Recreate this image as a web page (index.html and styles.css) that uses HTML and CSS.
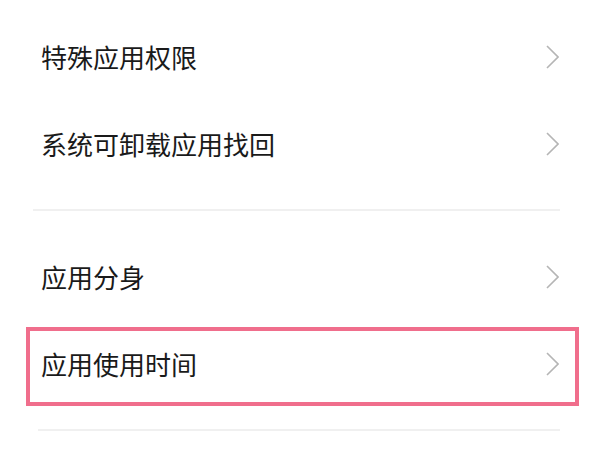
FILE: index.html
```html
<!DOCTYPE html>
<html lang="zh-CN">
<head>
    <meta charset="UTF-8">
    <meta name="viewport" content="width=device-width, initial-scale=1.0">
    <title>应用管理</title>
    <link rel="stylesheet" href="styles.css">
</head>
<body>
    <div class="list">
        <div class="row">
            <span class="label">特殊应用权限</span>
            <svg class="chevron" viewBox="0 0 13 24"><polyline points="1,1 12,12 1,23"/></svg>
        </div>
        <div class="row">
            <span class="label">系统可卸载应用找回</span>
            <svg class="chevron" viewBox="0 0 13 24"><polyline points="1,1 12,12 1,23"/></svg>
        </div>

        <div class="divider"></div>

        <div class="row">
            <span class="label">应用分身</span>
            <svg class="chevron" viewBox="0 0 13 24"><polyline points="1,1 12,12 1,23"/></svg>
        </div>
        <div class="row highlight">
            <span class="label">应用使用时间</span>
            <svg class="chevron" viewBox="0 0 13 24"><polyline points="1,1 12,12 1,23"/></svg>
        </div>

        <div class="divider last"></div>
    </div>
</body>
</html>
```

FILE: styles.css
```css
body {
    margin: 0;
    background: #ffffff;
    color: #1a1a1a;
    font-family: "Noto Sans CJK SC", "Noto Sans", sans-serif;
}

.list {
    padding-top: 13px;
}

.row {
    height: 87px;
    display: flex;
    align-items: center;
    justify-content: space-between;
    padding: 0 41px;
    position: relative;
}

.label {
    font-size: 26px;
    line-height: 1;
}

.chevron {
    width: 13px;
    height: 24px;
    fill: none;
    stroke: #b5b5b5;
    stroke-width: 1.6;
}

.divider {
    height: 2px;
    background: #f0f0f0;
    margin: 22px 40px 22px 33px;
}

.divider.last {
    margin: 22px 40px 0 38px;
}

/* annotation frame drawn over the row */
.highlight::after {
    content: "";
    position: absolute;
    left: 26px;
    right: 21px;
    top: 7px;
    bottom: 1px;
    border: 4px solid #f06e8c;
    pointer-events: none;
}
```
